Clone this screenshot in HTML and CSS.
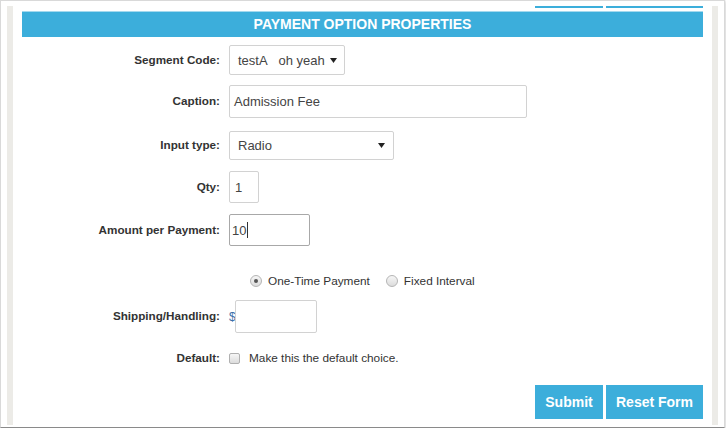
FILE: index.html
```html
<!DOCTYPE html>
<html>
<head>
<meta charset="utf-8">
<link rel="stylesheet" href="styles.css">
</head>
<body>
<div class="window">
  <div class="strip"></div>
  <div class="main">
    <div class="tabs"><span class="tab tab-a"></span><span class="tab tab-b"></span></div>
    <div class="header">PAYMENT OPTION PROPERTIES</div>
    <div class="form">
      <div class="row r-seg">
        <div class="label">Segment Code:</div>
        <div class="ctrl"><div class="select sel-seg"><span>testA&nbsp;&nbsp;&nbsp;oh yeah</span><svg class="arrow" width="7" height="5" viewBox="0 0 7 5"><path d="M0 0H7L3.5 5Z" fill="#222"/></svg></div></div>
      </div>
      <div class="row r-cap">
        <div class="label">Caption:</div>
        <div class="ctrl"><div class="field f-cap">Admission Fee</div></div>
      </div>
      <div class="row r-type">
        <div class="label">Input type:</div>
        <div class="ctrl"><div class="select sel-type"><span>Radio</span><svg class="arrow" width="7" height="5" viewBox="0 0 7 5"><path d="M0 0H7L3.5 5Z" fill="#222"/></svg></div></div>
      </div>
      <div class="row r-qty">
        <div class="label">Qty:</div>
        <div class="ctrl"><div class="field f-qty">1</div></div>
      </div>
      <div class="row r-amt">
        <div class="label">Amount per Payment:</div>
        <div class="ctrl"><div class="field f-amt focus">10<span class="caret"></span></div></div>
      </div>
      <div class="row r-radio">
        <div class="label"></div>
        <div class="ctrl radios">
          <span class="opt"><span class="radio checked"></span>One-Time Payment</span>
          <span class="opt"><span class="radio"></span>Fixed Interval</span>
        </div>
      </div>
      <div class="row r-ship">
        <div class="label">Shipping/Handling:</div>
        <div class="ctrl"><span class="dollar">$</span><div class="field f-ship"></div></div>
      </div>
      <div class="row r-def">
        <div class="label">Default:</div>
        <div class="ctrl"><span class="check"></span><span class="check-text">Make this the default choice.</span></div>
      </div>
      <div class="buttons">
        <button class="btn btn-submit">Submit</button>
        <button class="btn btn-reset">Reset Form</button>
      </div>
    </div>
  </div>
  <div class="strip"></div>
</div>
</body>
</html>
```
FILE: styles.css
```css
html, body {
  margin: 0;
  padding: 0;
  background: #ffffff;
}
body {
  font-family: "Liberation Sans", Arial, sans-serif;
  color: #333;
}
.window {
  box-sizing: border-box;
  width: 725px;
  height: 428px;
  border: 1px solid #d9d9d9;
  border-bottom: 1px solid #8a8a8a;
  box-shadow: 0 1px 3px rgba(0,0,0,0.3);
  background: #fff;
  display: flex;
  padding: 5px 6px 2px 6px;
}
.strip {
  width: 6px;
  background: #ecebe7;
  flex: none;
}
.main {
  flex: 1;
  padding: 0 9px;
  display: flex;
  flex-direction: column;
}
.tabs {
  display: flex;
  justify-content: flex-end;
  gap: 3px;
  height: 2px;
}
.tab {
  display: block;
  height: 2px;
  background: #3caedb;
}
.tab-a { width: 68px; }
.tab-b { width: 97px; }
.header {
  margin-top: 3px;
  border-top: 1px solid #a4d9ee;
  height: 25px;
  line-height: 25px;
  background: #3caedb;
  color: #fff;
  font-weight: bold;
  font-size: 14px;
  text-align: center;
}
.form {
  display: flex;
  flex-direction: column;
}
.row {
  display: grid;
  grid-template-columns: 198px 1fr;
  column-gap: 9px;
  align-items: center;
}
.label {
  text-align: right;
  font-weight: bold;
  font-size: 11.7px;
  color: #333;
  white-space: nowrap;
  margin-top: -2px;
}
.ctrl {
  display: flex;
  align-items: center;
}
.field, .select {
  box-sizing: border-box;
  border: 1px solid #d2d2d2;
  border-radius: 2px;
  font-size: 13px;
  color: #444;
  display: flex;
  align-items: center;
  background: #fff;
  white-space: nowrap;
}
.field { padding-left: 4px; }
.select {
  padding: 0 7px 0 8px;
  justify-content: space-between;
}
.arrow { flex: none; }
.r-seg { margin-top: 8px; }
.sel-seg { width: 116px; height: 30px; }
.r-cap { margin-top: 10px; }
.f-cap { width: 298px; height: 33px; }
.r-type { margin-top: 13px; }
.sel-type { width: 165px; height: 29px; padding-right: 8px; }
.r-qty { margin-top: 11px; }
.f-qty { width: 30px; height: 32px; padding-left: 5px; }
.r-amt { margin-top: 11px; }
.f-amt { width: 81px; height: 32px; padding-left: 2px; }
.focus { border-color: #a8a8a8; }
.caret {
  display: inline-block;
  width: 1px;
  height: 16px;
  background: #333;
  margin-left: 1px;
}
.r-radio { margin-top: 26px; height: 18px; }
.radios {
  padding-left: 21px;
  font-size: 11.8px;
  color: #333;
  gap: 16px;
}
.opt {
  display: inline-flex;
  align-items: center;
}
.radio {
  box-sizing: border-box;
  width: 12px;
  height: 12px;
  border-radius: 50%;
  border: 1px solid #b5b5b5;
  background: linear-gradient(#f6f6f6, #dcdcdc);
  margin-right: 6px;
  display: inline-flex;
  align-items: center;
  justify-content: center;
}
.radio.checked::after {
  content: "";
  width: 4px;
  height: 4px;
  border-radius: 50%;
  background: #555;
}
.r-ship { margin-top: 10px; }
.dollar {
  font-size: 12px;
  color: #3a6ea8;
  width: 6px;
}
.f-ship { width: 82px; height: 33px; }
.r-def { margin-top: 17px; height: 16px; }
.check {
  box-sizing: border-box;
  width: 11px;
  height: 11px;
  border: 1px solid #b0b0b0;
  border-radius: 2px;
  background: linear-gradient(#f6f6f6, #dcdcdc);
  margin-right: 9px;
}
.check-text {
  font-size: 11.8px;
  color: #333;
}
.buttons {
  margin-top: 19px;
  display: flex;
  justify-content: flex-end;
  gap: 3px;
}
.btn {
  border: none;
  background: #3caedb;
  color: #fff;
  font-family: "Liberation Sans", Arial, sans-serif;
  font-weight: bold;
  font-size: 14px;
  height: 34px;
  padding: 0;
}
.btn-submit { width: 68px; }
.btn-reset { width: 97px; }
```
